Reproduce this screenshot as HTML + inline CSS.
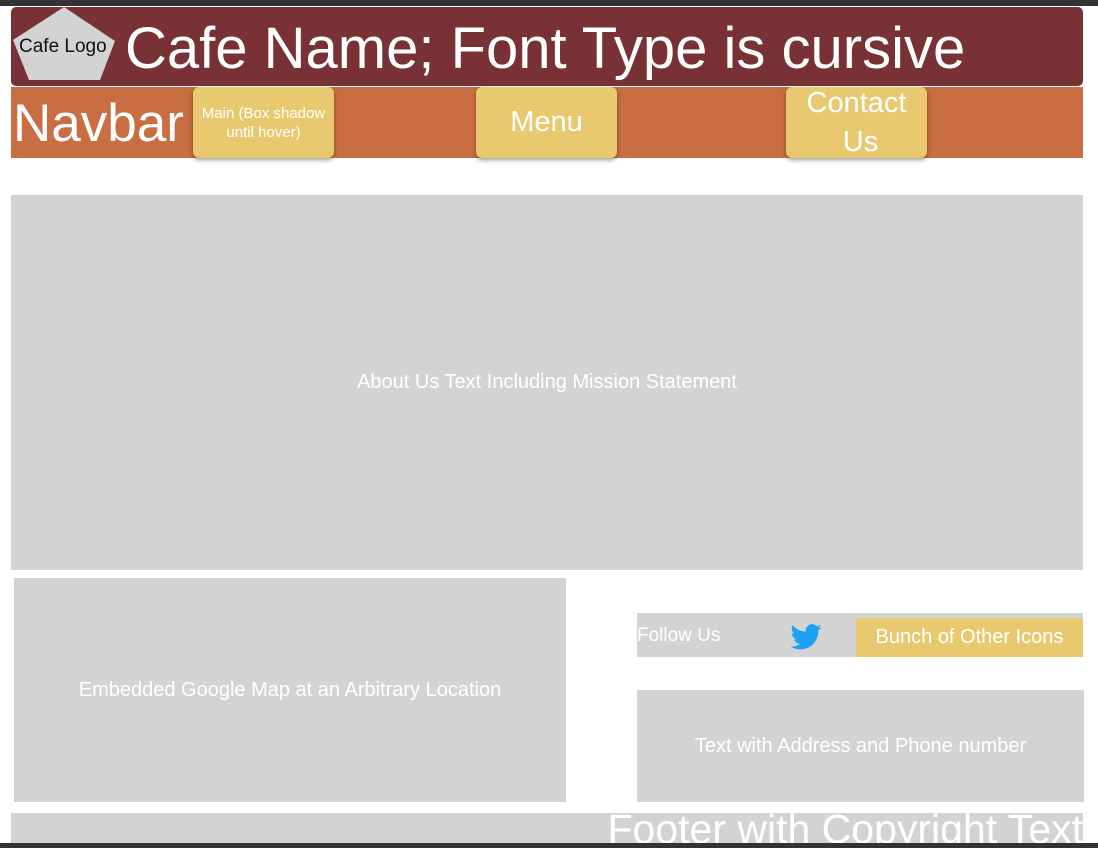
<!DOCTYPE html>
<html><head><meta charset="utf-8"><style>
body{margin:0;width:1098px;height:848px;position:relative;overflow:hidden;background:#fff;font-family:"Liberation Sans",sans-serif;color:#fff}
div{position:absolute;box-sizing:border-box}
.g{background:#d3d3d3}
.btn{background:#e9c96f;border-radius:6px;box-shadow:0 2px 5px rgba(0,0,0,.4);display:flex;align-items:center;justify-content:center;text-align:center;top:87px;height:71px;width:141px}
.c{display:flex;align-items:center;justify-content:center;font-size:20px}
</style></head><body>
<div style="left:0;top:0;width:1098px;height:6px;background:#333"></div>
<div style="left:11px;top:7px;width:1072px;height:79px;background:#783134;border-radius:5px"></div>
<svg style="position:absolute;left:13px;top:7px" width="103" height="74"><polygon points="51,0 102,34 87,73 16,73 0,33" fill="#d3d3d3"/></svg>
<div style="left:19px;top:36px;font-size:19px;color:#111">Cafe Logo</div>
<div style="left:125px;top:15px;font-size:58px;white-space:nowrap">Cafe Name; Font Type is cursive</div>
<div style="left:11px;top:87px;width:1072px;height:71px;background:#c96e42"></div>
<div style="left:13px;top:93px;font-size:53px">Navbar</div>
<div class="btn" style="left:193px;font-size:15px;line-height:19px">Main (Box shadow<br>until hover)</div>
<div class="btn" style="left:476px;font-size:29px">Menu</div>
<div class="btn" style="left:786px;font-size:29px;line-height:39px">Contact<br>&nbsp;Us</div>
<div class="g c" style="left:11px;top:195px;width:1072px;height:375px">About Us Text Including Mission Statement</div>
<div class="g c" style="left:14px;top:578px;width:552px;height:224px">Embedded Google Map at an Arbitrary Location</div>
<div class="g" style="left:637px;top:613px;width:446px;height:44px"></div>
<div style="left:637px;top:625px;font-size:19px">Follow Us</div>
<svg style="position:absolute;left:790px;top:624px" width="32" height="26" viewBox="0 0 24 20"><path fill="#1da1f2" d="M24 2.4a9.8 9.8 0 0 1-2.8.8A4.9 4.9 0 0 0 23.3.5a9.9 9.9 0 0 1-3.1 1.2A4.9 4.9 0 0 0 11.8 6 14 14 0 0 1 1.7.9a4.9 4.9 0 0 0 1.5 6.6A4.9 4.9 0 0 1 1 6.9a4.9 4.9 0 0 0 3.9 4.8 4.9 4.9 0 0 1-2.2.1 4.9 4.9 0 0 0 4.6 3.4A9.9 9.9 0 0 1 0 17.3 14 14 0 0 0 7.5 19.5c9.1 0 14-7.5 14-14v-.6A10 10 0 0 0 24 2.4z"/></svg>
<div class="c" style="left:856px;top:618px;width:227px;height:39px;background:#e9c96f;font-size:20px">Bunch of Other Icons</div>
<div class="g c" style="left:637px;top:690px;width:447px;height:112px">Text with Address and Phone number</div>
<div class="g" style="left:11px;top:813px;width:1072px;height:30px;overflow:hidden"><div style="right:0;top:-7px;font-size:41px;white-space:nowrap">Footer with Copyright Text</div></div>
<div style="left:0;top:843px;width:1098px;height:5px;background:#333"></div>
</body></html>
